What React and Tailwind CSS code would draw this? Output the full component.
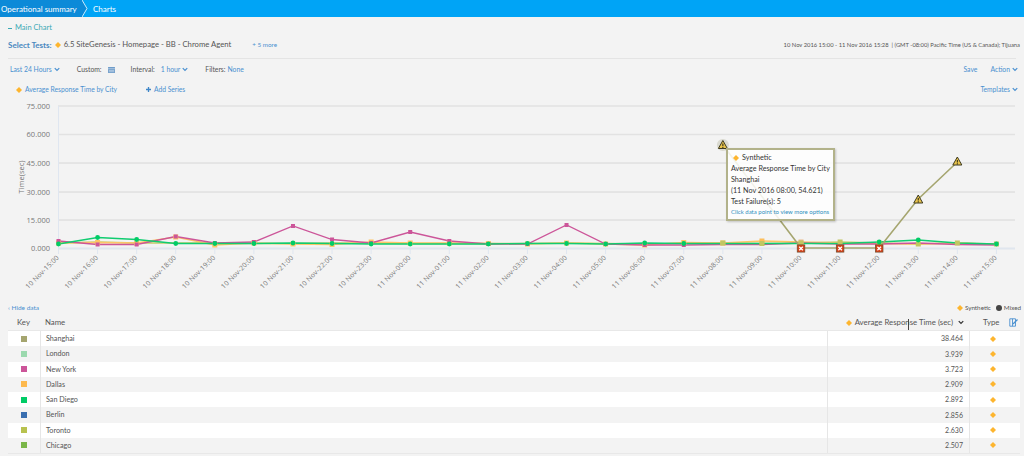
const X = (i) => 58.5 + 39.08 * i;

const hours = [
  "10 Nov-15:00", "10 Nov-16:00", "10 Nov-17:00", "10 Nov-18:00", "10 Nov-19:00",
  "10 Nov-20:00", "10 Nov-21:00", "10 Nov-22:00", "10 Nov-23:00", "11 Nov-00:00",
  "11 Nov-01:00", "11 Nov-02:00", "11 Nov-03:00", "11 Nov-04:00", "11 Nov-05:00",
  "11 Nov-06:00", "11 Nov-07:00", "11 Nov-08:00", "11 Nov-09:00", "11 Nov-10:00",
  "11 Nov-11:00", "11 Nov-12:00", "11 Nov-13:00", "11 Nov-14:00", "11 Nov-15:00",
];

const yTicks = [
  ["75.000", 106], ["60.000", 134.5], ["45.000", 163],
  ["30.000", 192], ["15.000", 220], ["0.000", 248],
];

// pixel y of every point, index = hour
const dallas = [243, 242.5, 243, 237, 245, 243, 244, 244.5, 242, 243, 243, 243.5, 244, 243, 244, 245, 242.5, 243, 241, 242, 243, 243.5, 244, 243, 244.5];
const newYork = [241, 244.5, 244.5, 236.5, 243, 242, 226, 239.5, 243, 232, 241, 244, 244, 225, 244, 245, 245, 244.5, 244.5, 243, 244, 244, 243, 244.5, 245];
const sanDiego = [244, 237.5, 239.5, 243.5, 243.5, 243.5, 243, 243.5, 244, 244, 244, 244, 243.5, 243.5, 244, 243, 243.5, 243.5, 243.5, 243.5, 243.5, 242, 240, 243, 244];
const toronto = [243, 242, 243, 243, 243, 243.5, 243.5, 243, 243, 243.5, 243.5, 243.5, 243.5, 243, 243.5, 244, 243.5, 243, 243.5, 243, 242, 243, 244, 243, 244];
const shanghai = [[17, 145], [19, 248], [20, 248], [21, 248], [22, 199], [23, 162]];

const rows = [
  ["Shanghai", "#a5a56f", "38.464"],
  ["London", "#9bd9ae", "3.939"],
  ["New York", "#cc5599", "3.723"],
  ["Dallas", "#fdb94e", "2.909"],
  ["San Diego", "#00cc66", "2.892"],
  ["Berlin", "#3a6fb0", "2.856"],
  ["Toronto", "#b8c24f", "2.630"],
  ["Chicago", "#7ab648", "2.507"],
];

function Diamond({ className = "w-[6px] h-[6px]" }) {
  return (
    <svg viewBox="0 0 6 6" className={className + " shrink-0"}>
      <path d="M3 0 L4 1 L5 2 L6 3 L5 4 L4 5 L3 6 L2 5 L1 4 L0 3 L1 2 L2 1 Z" fill="#fdb52f" />
    </svg>
  );
}

function Chevron({ className = "" }) {
  return (
    <svg viewBox="0 0 8 6" className={"w-[6px] h-[5px] shrink-0 " + className}>
      <path d="M1 1.2 L4 4.2 L7 1.2" fill="none" stroke="currentColor" strokeWidth="1.7" />
    </svg>
  );
}

function Line({ ys, color }) {
  return (
    <polyline
      points={ys.map((y, i) => `${X(i)},${y}`).join(" ")}
      fill="none"
      stroke={color}
      strokeWidth="1.3"
    />
  );
}

function Warning({ x, y, halo }) {
  return (
    <g>
      {halo && <circle cx={x} cy={y} r="6" fill="#cfcfc0" opacity="0.7" />}
      <path d={`M${x} ${y - 4.5} L${x + 4.5} ${y + 3.5} L${x - 4.5} ${y + 3.5} Z`} fill="#e9c44c" stroke="#3d3a20" strokeWidth="1" />
      <path d={`M${x} ${y - 1.5} V${y + 1}`} stroke="#33301a" strokeWidth="1.1" />
      <path d={`M${x} ${y + 1.8} V${y + 2.9}`} stroke="#33301a" strokeWidth="1.1" />
    </g>
  );
}

function Fail({ x, y }) {
  return (
    <g>
      <rect x={x - 3.8} y={y - 3.6} width="7.6" height="7.2" fill="#d9421a" stroke="#6b4a2a" strokeWidth="0.7" />
      <path d={`M${x - 1.8} ${y - 1.8} L${x + 1.8} ${y + 1.8} M${x + 1.8} ${y - 1.8} L${x - 1.8} ${y + 1.8}`} stroke="#fff" strokeWidth="1.3" />
    </g>
  );
}

function Chart() {
  return (
    <svg viewBox="0 100 1024 200" className="block h-[200px] w-[1024px]" style={{ fontFamily: "'Open Sans', sans-serif" }}>
      {yTicks.slice(0, 5).map(([label, y], i) => (
        <line key={label} x1="58" x2="1015" y1={y} y2={y} stroke={i < 2 ? "#e2e2e2" : "#d6d6d6"} strokeWidth={i < 2 ? 1.6 : 1} />
      ))}
      <line x1="58.5" x2="58.5" y1="106" y2="248" stroke="#dfe6f0" />
      <line x1="58" x2="1015" y1="248.5" y2="248.5" stroke="#e0e6ee" strokeWidth="2" />
      {yTicks.map(([label, y]) => (
        <text key={label} x="50" y={y + 2.5} textAnchor="end" fontSize="7.5" fill="#777">{label}</text>
      ))}
      <text transform="translate(24 177) rotate(-90)" textAnchor="middle" fontSize="7.5" fill="#777">Time(sec)</text>
      {hours.map((h, i) => (
        <g key={h}>
          <line x1={X(i)} x2={X(i)} y1="248" y2="254" stroke="#dfe6f0" />
          <text transform={`translate(${X(i) + 1} 258) rotate(-45)`} textAnchor="end" fontSize="6.8" letterSpacing="0.2" fill="#777">{h}</text>
        </g>
      ))}

      <Line ys={toronto} color="#c4cc6a" />
      <Line ys={dallas} color="#fdc566" />
      <Line ys={newYork} color="#cc5599" />
      <Line ys={sanDiego} color="#10cc70" />
      <polyline points={shanghai.map(([i, y]) => `${X(i)},${y}`).join(" ")} fill="none" stroke="#a5a56f" strokeWidth="1.6" />

      {dallas.map((y, i) => i < 18 && (
        <rect key={i} x={X(i) - 2.5} y={y - 2.5} width="5" height="5" fill="#fdc566" />
      ))}
      <rect x={X(18) - 2.5} y="238.5" width="5" height="5" fill="#fdbe5a" />
      <rect x={X(19) - 2.5} y="239.5" width="5" height="5" fill="#e9b98a" />
      {newYork.map((y, i) => i < 17 && (
        <rect key={i} x={X(i) - 2} y={y - 2} width="4" height="4" fill="#cc5599" />
      ))}
      {toronto.map((y, i) => i >= 17 && (
        <rect key={i} x={X(i) - 2.5} y={y - 2.5} width="5" height="5" fill="#c1c662" />
      ))}
      {sanDiego.map((y, i) => (i < 17 || i === 21 || i === 22 || i === 24) && (
        <circle key={i} cx={X(i)} cy={y} r="2.4" fill="#00cc66" />
      ))}

      <Warning x={X(17)} y={145} halo />
      <Warning x={X(22)} y={199.5} />
      <Warning x={X(23)} y={161.5} />
      <Fail x={X(19)} y={248.5} />
      <Fail x={X(20)} y={248.5} />
      <Fail x={X(21)} y={248.5} />
    </svg>
  );
}

function Tooltip() {
  return (
    <div className="absolute left-[726px] top-[48px] h-[73px] w-[109px] whitespace-nowrap border-2 border-[#b2b28a] bg-white/85 pl-[3px] pt-[2px] text-[7.2px] leading-[11px] text-[#333] shadow-[1px_1px_2px_rgba(0,0,0,0.2)]">
      <div className="flex items-center gap-[3px] pl-[2px]">
        <Diamond />
        <span>Synthetic</span>
      </div>
      <div>Average Response Time by City</div>
      <div>Shanghai</div>
      <div>(11 Nov 2016 08:00, 54.621)</div>
      <div>Test Failure(s): 5</div>
      <div className="text-[6px] leading-[9px] text-[#2f8fc0]">Click data point to view more options</div>
    </div>
  );
}

function TableHeader() {
  return (
    <div className="grid h-[15px] grid-cols-[33px_787px_142px_50px] items-center text-[7.8px] text-[#555]">
      <div className="pl-[9px]">Key</div>
      <div className="pl-[4px]">Name</div>
      <div className="relative flex items-center justify-end gap-[3px] pr-[6px]">
        <Diamond />
        <span>Average Response Time (sec)</span>
        <Chevron className="ml-[2px] text-[#333]" />
        <div className="absolute left-[80px] top-[2px] h-[11px] w-px bg-[#444]" />
      </div>
      <div className="relative pl-[13px]">
        Type
        <svg viewBox="0 0 9 9" className="absolute right-[2px] top-[1px] h-[9px] w-[9px]">
          <path d="M0.8 0.8 H6.5 V8.2 H0.8 Z M3.5 0.8 V8.2" fill="none" stroke="#4a90d0" strokeWidth="0.9" />
          <path d="M4 6 L8.5 1.5" stroke="#4a90d0" strokeWidth="1.3" />
        </svg>
      </div>
    </div>
  );
}

function App() {
  return (
    <div className="relative h-[456px] w-[1024px] overflow-hidden bg-[#f3f3f3] font-['Lato',sans-serif] text-[7.2px] text-[#555]">
      <div className="flex h-[17px] items-center whitespace-nowrap bg-[#00a4f6] text-[8px] text-white">
        <div className="flex h-full w-[82px] items-center bg-[#0c8ad8] pl-px">Operational summary</div>
        <svg viewBox="0 0 6 17" className="h-[17px] w-[6px] shrink-0">
          <path d="M0 0 L5 8.5 L0 17 Z" fill="#0c8ad8" />
          <path d="M0 0 L5 8.5 L0 17" fill="none" stroke="#fff" strokeWidth="0.8" />
        </svg>
        <div className="pl-[5px]">Charts</div>
      </div>

      <div className="flex h-[20px] items-center gap-[3px] pl-[8px] pt-[2px] text-[7.5px] text-[#3aa9b5]">
        <span className="h-px w-[4px] bg-[#3aa9b5]" />
        <span>Main Chart</span>
      </div>

      <div className="mx-[8px] flex h-[22px] items-center whitespace-nowrap border-b border-[#e4e4e4] pb-[5px]">
        <span className="text-[8px] font-bold text-[#4a88c0]">Select Tests:</span>
        <Diamond className="ml-[3px] h-[6px] w-[6px]" />
        <span className="ml-[3px] text-[7.7px] text-[#555]">6.5 SiteGenesis - Homepage - BB - Chrome Agent</span>
        <span className="ml-[21px] text-[6.3px] text-[#4a90d0]">+ 5 more</span>
        <span className="-mr-[4px] ml-auto text-[5.8px] text-[#555]">10 Nov 2016 15:00 - 11 Nov 2016 15:28 &nbsp;| (GMT -08:00) Pacific Time (US &amp; Canada); Tijuana</span>
      </div>

      <div className="mx-[8px] flex h-[20px] items-center whitespace-nowrap pt-px text-[6.8px]">
        <span className="ml-[2px] flex items-center gap-[2px] text-[#4a90d0]">Last 24 Hours <Chevron /></span>
        <span className="ml-[17px] text-[#555]">Custom:</span>
        <svg viewBox="0 0 8 7" className="ml-[6px] h-[6px] w-[7px]">
          <rect width="8" height="7" fill="#6f9cc9" />
          <path d="M0 2 H8 M1 4 H7 M1 5.5 H7" stroke="#e6eef7" strokeWidth="0.6" />
        </svg>
        <span className="ml-[16px] text-[#555]">Interval:</span>
        <span className="ml-[6px] flex items-center gap-[2px] text-[#4a90d0]">1 hour <Chevron /></span>
        <span className="ml-[17px] text-[#555]">Filters:</span>
        <span className="ml-[2px] text-[#4a90d0]">None</span>
        <span className="ml-auto text-[#4a90d0]">Save</span>
        <span className="-mr-[2px] ml-[13px] flex items-center gap-[2px] text-[#4a90d0]">Action <Chevron /></span>
      </div>

      <div className="flex h-[21px] items-center whitespace-nowrap pl-[16px] pr-[6px] text-[6.7px] text-[#4a90d0]">
        <Diamond />
        <span className="ml-[3px]">Average Response Time by City</span>
        <svg viewBox="0 0 6 6" className="ml-[29px] h-[5px] w-[5px]">
          <path d="M3 0 V6 M0 3 H6" stroke="#3f86c8" strokeWidth="1.6" />
        </svg>
        <span className="ml-[3px]">Add Series</span>
        <span className="ml-auto flex items-center gap-[2px]">Templates <Chevron /></span>
      </div>

      <div className="relative h-[200px]">
        <Chart />
        <Tooltip />
      </div>

      <div className="flex h-[15px] items-center justify-between pl-[8px] pr-[3px] text-[6.3px]">
        <span className="text-[6.5px] text-[#4a90d0]">‹ Hide data</span>
        <span className="flex items-center gap-[2px] text-[#555]">
          <Diamond />
          <span>Synthetic</span>
          <span className="ml-[3px] h-[6px] w-[6px] rounded-full bg-[#444]" />
          <span>Mixed</span>
        </span>
      </div>

      <div className="mx-[8px] w-[1012px]">
        <TableHeader />
        <div className="border-y border-[#e8e8e8]">
          {rows.map(([name, color, value], i) => (
            <div
              key={name}
              className={"grid h-[15.25px] grid-cols-[33px_787px_142px_50px] items-center " + (i % 2 === 0 ? "bg-white" : "bg-[#f3f3f3]")}
            >
              <div className="flex h-full items-center justify-center border-r border-[#e6e6e6]">
                <span className="h-[6px] w-[6px]" style={{ backgroundColor: color }} />
              </div>
              <div className="flex h-full items-center border-r border-[#e6e6e6] pl-[5px] pt-[2px]">{name}</div>
              <div className="flex h-full items-center justify-end border-r border-[#e6e6e6] pr-[6px] text-[7px]">{value}</div>
              <div className="flex h-full items-center pl-[20px]">
                <Diamond />
              </div>
            </div>
          ))}
        </div>
      </div>
    </div>
  );
}

export default App;
